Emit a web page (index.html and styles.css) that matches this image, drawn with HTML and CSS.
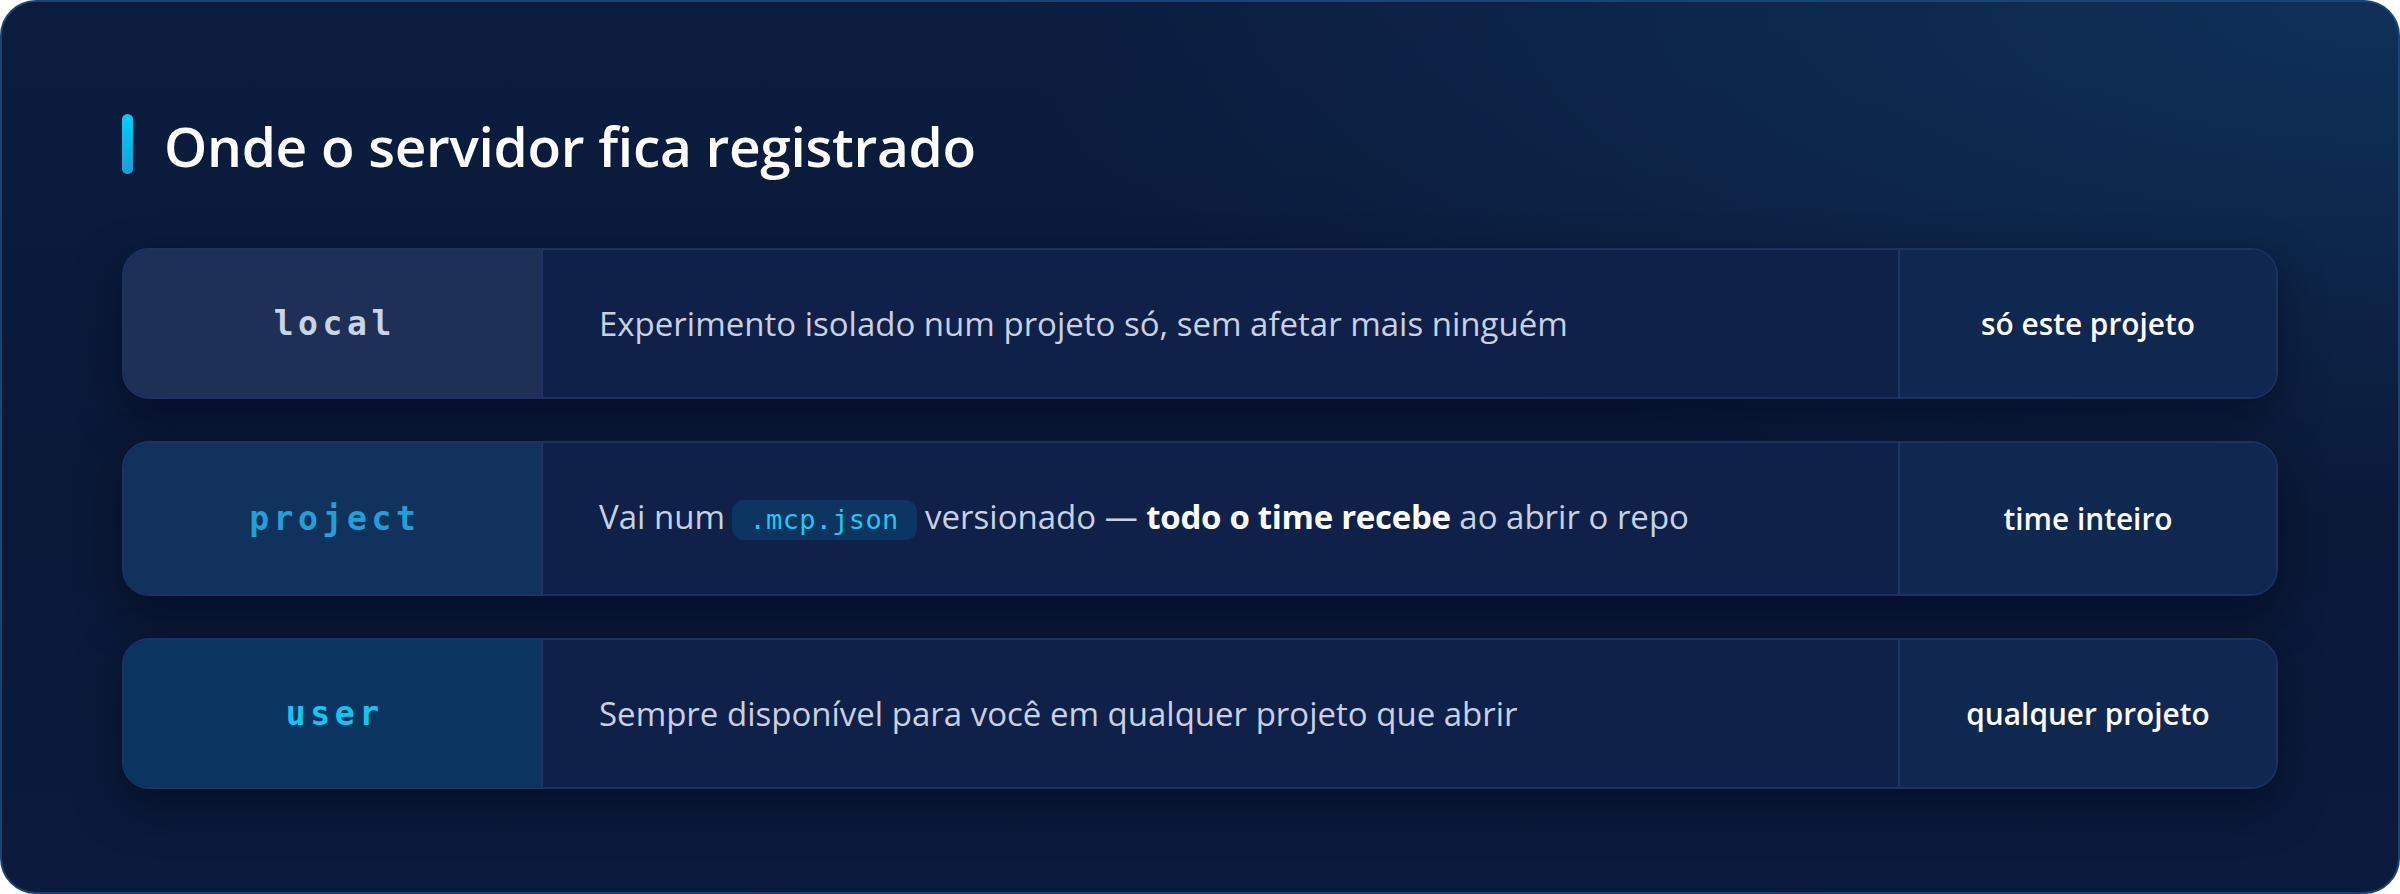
FILE: index.html
```html
<!DOCTYPE html>
<html lang="pt-BR">
<head>
<meta charset="utf-8">
<title>Onde o servidor fica registrado</title>
<link rel="stylesheet" href="styles.css">
</head>
<body>
<div class="panel">
  <h1 class="title"><span class="bar"></span><span class="title-text">Onde o servidor fica registrado</span></h1>
  <div class="rows">
    <div class="row">
      <div class="scope scope-local"><span class="scope-name">local</span></div>
      <div class="desc"><span class="desc-text">Experimento isolado num projeto só, sem afetar mais ninguém</span></div>
      <div class="reach">só este projeto</div>
    </div>
    <div class="row">
      <div class="scope scope-project"><span class="scope-name">project</span></div>
      <div class="desc"><span class="desc-text">Vai num <code class="pill">.mcp.json</code> versionado — <strong>todo o time recebe</strong> ao abrir o repo</span></div>
      <div class="reach">time inteiro</div>
    </div>
    <div class="row">
      <div class="scope scope-user"><span class="scope-name">user</span></div>
      <div class="desc"><span class="desc-text">Sempre disponível para você em qualquer projeto que abrir</span></div>
      <div class="reach">qualquer projeto</div>
    </div>
  </div>
</div>
</body>
</html>
```

FILE: styles.css
```css
html, body {
  margin: 0;
  padding: 0;
  background: #ffffff;
}

body {
  width: 2400px;
  height: 894px;
  font-family: "Open Sans", "Noto Sans", sans-serif;
}

.panel {
  box-sizing: border-box;
  width: 2400px;
  height: 894px;
  border: 2px solid #174675;
  border-radius: 36px;
  padding: 112px 120px 0 120px;
  background:
    radial-gradient(ellipse 1400px 520px at 100% 0%, rgba(16, 52, 92, 0.85), rgba(16, 52, 92, 0) 100%),
    linear-gradient(180deg, #0b1c3f 0%, #0a1938 55%, #0b1b3d 100%);
  overflow: hidden;
}

.title {
  display: flex;
  align-items: center;
  gap: 31px;
  margin: 0;
  height: 60px;
  font-weight: 600;
  font-size: 55px;
  color: #ffffff;
  letter-spacing: -0.3px;
}

.bar {
  flex: none;
  width: 11px;
  height: 60px;
  border-radius: 6px;
  background: linear-gradient(180deg, #00cdfd 0%, #1c9bd8 100%);
}

.title-text {
  line-height: 60px;
  position: relative;
  top: 2px;
}

.rows {
  display: flex;
  flex-direction: column;
  gap: 42px;
  margin-top: 74px;
}

.row {
  display: grid;
  grid-template-columns: 419px 1fr 378px;
  border: 2px solid #1d3260;
  border-radius: 27px;
  overflow: hidden;
  background: #0f2049;
  box-shadow: 0 18px 44px rgba(2, 8, 24, 0.55);
}

.scope {
  display: flex;
  align-items: center;
  justify-content: center;
  border-right: 2px solid #1f3563;
}

.scope-name {
  font-family: "DejaVu Sans Mono", "Liberation Mono", monospace;
  font-weight: 700;
  font-size: 33px;
  letter-spacing: 4.6px;
  padding-left: 4.6px;
}

.scope-local { background: #1e3056; color: #c9d4e6; }
.scope-project { background: #11325c; color: #1fa0d8; }
.scope-user { background: #0b3560; color: #12c5f2; }

.desc {
  display: flex;
  align-items: center;
  padding: 54px 40px 54px 56px;
  font-size: 33px;
  line-height: 39px;
  color: #c7d1e2;
  white-space: nowrap;
}

.desc strong {
  font-weight: 700;
  color: #ffffff;
  letter-spacing: -0.3px;
}

.pill {
  display: inline-block;
  margin: 0 0 0 -2px;
  padding: 0 18px;
  height: 40px;
  line-height: 40px;
  border-radius: 12px;
  background: #0c3561;
  color: #1ec8f4;
  font-family: "DejaVu Sans Mono", "Liberation Mono", monospace;
  font-size: 27px;
  letter-spacing: 0.3px;
}

.reach {
  display: flex;
  align-items: center;
  justify-content: center;
  border-left: 2px solid #1f3563;
  background: #10284f;
  color: #ffffff;
  font-weight: 600;
  font-size: 29.8px;
}
```
